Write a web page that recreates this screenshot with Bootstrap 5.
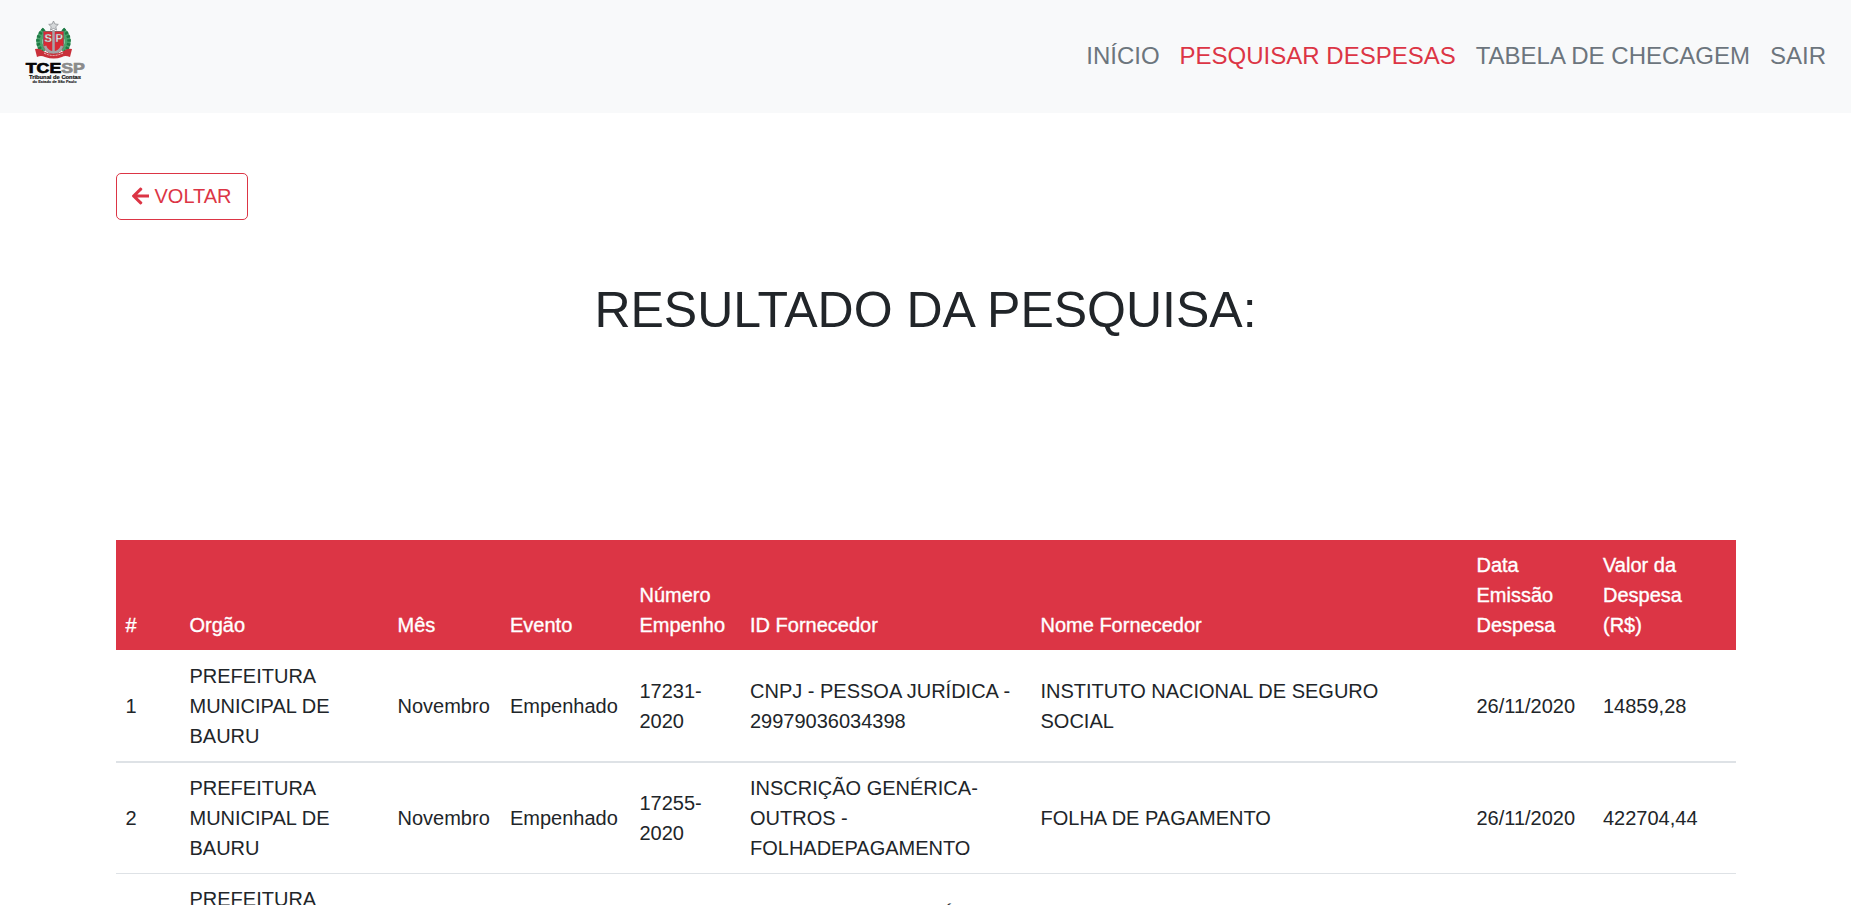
<!DOCTYPE html>
<html lang="pt-BR">
<head>
<meta charset="utf-8">
<meta name="viewport" content="width=device-width, initial-scale=1">
<title>Resultado da pesquisa</title>
<link href="https://cdn.jsdelivr.net/npm/bootstrap@5.3.0/dist/css/bootstrap.min.css" rel="stylesheet">
<style>
html{font-size:20px;overflow:hidden}
body{font-family:"Liberation Sans",Arial,sans-serif;color:#212529;height:905px;overflow:hidden}
.topbar{height:113px;background:#f8f9fa;padding:0 15px 0 25px}
.topbar .nav-link{font-size:24px;line-height:36px;padding:7px 10px 9px;color:#6c757d}
.topbar .nav-link.current{color:#dc3545}
.page{width:1620px;margin:60px auto 0}
.btn-back{height:47px;padding:6px 15px 8px;border-radius:5px;--bs-btn-color:#dc3545;--bs-btn-border-color:#dc3545}
.btn-back svg{margin-right:5.500px}
.title{font-size:50px;font-weight:400;line-height:60px;margin:60px 0 200px}
.results{table-layout:fixed;border-collapse:separate;border-spacing:0;width:1620px;color:#212529}
.results th,.results td{padding:10px;border:0;line-height:30px}
.results th{background:#dc3545;color:#fff;font-weight:400;vertical-align:bottom;-webkit-text-stroke:.35px #fff}
.results td{vertical-align:middle;border-bottom:1px solid #dee2e6}
.results .lead-row td{padding-top:11px;border-bottom-width:2px}
</style>
</head>
<body>
<nav class="topbar d-flex align-items-center justify-content-between">
  <a href="#" class="d-block" aria-label="TCESP">
    <svg class="d-block" width="62" height="73" viewBox="0 0 62 73" font-family="Liberation Sans, Arial, sans-serif">
      <path d="M20 10Q10 19 18 32M37 10Q47 19 39 32" fill="none" stroke="#4aa36c" stroke-width="6"/>
      <path d="M19 9Q8 19 17 32M38 9Q49 19 40 32" fill="none" stroke="#1f7a45" stroke-width="3.500" stroke-dasharray="2.500 1.500"/>
      <path d="M18.500 11.500h20v13q0 7-10 10q-10-3-10-10z" fill="#d92a34" stroke="#8a5a5c"/>
      <path d="M28.500 10v22M20 26q2 6 8.500 6.500q6.500-.5 8.500-6.500" stroke="#a5a5a8" stroke-width="2.500" fill="none"/>
      <path d="M10 29q5-1 8 2q10 6 21 0q3-3 8-2l-2 8q-5-2-8 0q-8 3-17 0q-4-2-8 0z" fill="#c9303a"/>
      <path d="M19 33q9 5 19 0" stroke="#e8c9cb" stroke-width="1" fill="none" stroke-dasharray="2 1"/>
      <path d="M28.500 1l1.400 3 3.400.4-2.500 2.300.7 3.400-3-1.700-3 1.700.7-3.400-2.500-2.300 3.400-.4z" fill="#d5d8da" stroke="#8e9295" stroke-width=".8"/>
      <g font-size="11" font-weight="700" fill="#eee" stroke="#666" stroke-width=".3"><text x="19.500" y="21.500">S</text><text x="30.500" y="21.500">P</text></g>
      <text x=".8" y="53" font-size="15" font-weight="700" textLength="59" lengthAdjust="spacingAndGlyphs" fill="#050505" stroke="#050505" stroke-width=".7">TCE<tspan fill="#8b8b8b" stroke="#8b8b8b">SP</tspan></text>
      <text x="4" y="58.800" font-size="5.800" font-weight="700" textLength="52" lengthAdjust="spacingAndGlyphs" fill="#111" stroke="#111" stroke-width=".2">Tribunal de Contas</text>
      <text x="7.500" y="63" font-size="4" font-weight="700" textLength="44" lengthAdjust="spacingAndGlyphs" fill="#222" stroke="#222" stroke-width=".15">do Estado de São Paulo</text>
    </svg>
  </a>
  <div class="d-flex">
    <a class="nav-link" href="#">INÍCIO</a>
    <a class="nav-link current" href="#">PESQUISAR DESPESAS</a>
    <a class="nav-link" href="#">TABELA DE CHECAGEM</a>
    <a class="nav-link" href="#">SAIR</a>
  </div>
</nav>
<main class="page">
  <a href="#" class="btn btn-outline-danger btn-back d-inline-flex align-items-center"><svg width="17.5" height="20" viewBox="0 0 448 512" fill="currentColor" aria-hidden="true"><path d="M257.500 445.100l-22.200 22.200c-9.400 9.400-24.600 9.400-33.900 0L7 273c-9.400-9.400-9.400-24.600 0-33.900L201.400 44.700c9.400-9.400 24.600-9.400 33.900 0l22.200 22.200c9.500 9.500 9.300 25-.4 34.300L136.600 216H424c13.300 0 24 10.700 24 24v32c0 13.300-10.700 24-24 24H136.600l120.500 114.800c9.800 9.300 10 24.800.4 34.300z"/></svg>VOLTAR</a>
  <h1 class="title text-center">RESULTADO DA PESQUISA:</h1>
  <table class="results">
    <colgroup><col style="width:64px"><col style="width:208px"><col style="width:112.5px"><col style="width:129.5px"><col style="width:110.5px"><col style="width:290.5px"><col style="width:436px"><col style="width:126.5px"><col style="width:142.500px"></colgroup>
    <thead>
      <tr><th>#</th><th>Orgão</th><th>Mês</th><th>Evento</th><th>Número Empenho</th><th>ID Fornecedor</th><th>Nome Fornecedor</th><th>Data Emissão Despesa</th><th>Valor da Despesa (R$)</th></tr>
    </thead>
    <tbody>
      <tr class="lead-row"><td>1</td><td>PREFEITURA MUNICIPAL DE BAURU</td><td class="text-nowrap">Novembro</td><td class="text-nowrap">Empenhado</td><td>17231-<br>2020</td><td>CNPJ - PESSOA JURÍDICA - 29979036034398</td><td>INSTITUTO NACIONAL DE SEGURO<br>SOCIAL</td><td class="text-nowrap">26/11/2020</td><td>14859,28</td></tr>
      <tr><td>2</td><td>PREFEITURA MUNICIPAL DE BAURU</td><td class="text-nowrap">Novembro</td><td class="text-nowrap">Empenhado</td><td>17255-<br>2020</td><td>INSCRIÇÃO GENÉRICA-<br>OUTROS -<br>FOLHADEPAGAMENTO</td><td>FOLHA DE PAGAMENTO</td><td class="text-nowrap">26/11/2020</td><td>422704,44</td></tr>
      <tr><td></td><td>PREFEITURA<br>&nbsp;<br>&nbsp;</td><td></td><td></td><td></td><td>CNPJ - PESSOA JURÍDICA -<br>&nbsp;</td><td></td><td></td><td></td></tr>
    </tbody>
  </table>
</main>
<script src="https://cdn.jsdelivr.net/npm/bootstrap@5.3.0/dist/js/bootstrap.bundle.min.js"></script>
</body>
</html>
